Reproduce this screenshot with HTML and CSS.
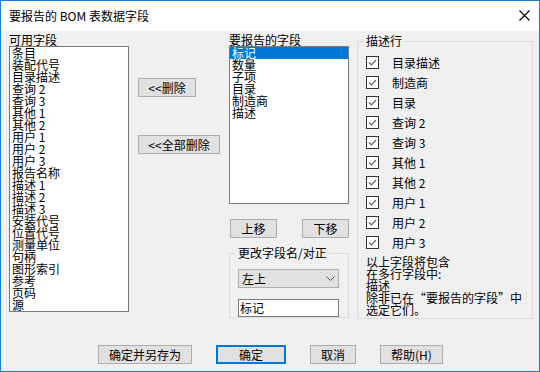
FILE: index.html
```html
<!DOCTYPE html>
<html lang="zh-CN">
<head>
    <meta charset="UTF-8">
    <title>要报告的 BOM 表数据字段</title>
    <link rel="stylesheet" href="styles.css">
</head>
<body>

    <div class="window">
        <div class="titlebar">
            <span class="title">要报告的 BOM 表数据字段</span>
            <svg class="close" width="11" height="11" viewBox="0 0 11 11">
                <path d="M0.5 0.5 L10.5 10.5 M10.5 0.5 L0.5 10.5" stroke="#000" stroke-width="1.1" fill="none"/>
            </svg>
        </div>

        <div class="content">
            <div class="panes">
                <div class="col-avail">
                    <div class="caption">可用字段</div>
                    <div class="avail-row">
                        <ul class="listbox avail">
                            <li>条目</li>
                            <li>装配代号</li>
                            <li>目录描述</li>
                            <li>查询 2</li>
                            <li>查询 3</li>
                            <li>其他 1</li>
                            <li>其他 2</li>
                            <li>用户 1</li>
                            <li>用户 2</li>
                            <li>用户 3</li>
                            <li>报告名称</li>
                            <li>描述 1</li>
                            <li>描述 2</li>
                            <li>描述 3</li>
                            <li>安装代号</li>
                            <li>位置代号</li>
                            <li>测量单位</li>
                            <li>句柄</li>
                            <li>图形索引</li>
                            <li>参考</li>
                            <li>页码</li>
                            <li>源</li>
                        </ul>
                        <div class="remove-btns">
                            <button class="btn btn-remove">&lt;&lt;删除</button>
                            <button class="btn btn-remove-all">&lt;&lt;全部删除</button>
                        </div>
                    </div>
                </div>

                <div class="col-report">
                    <div class="caption">要报告的字段</div>
                    <ul class="listbox report">
                        <li class="selected">标记</li>
                        <li>数量</li>
                        <li>子项</li>
                        <li>目录</li>
                        <li>制造商</li>
                        <li>描述</li>
                    </ul>
                    <div class="move-btns">
                        <button class="btn btn-move">上移</button>
                        <button class="btn btn-move">下移</button>
                    </div>
                    <fieldset class="group rename">
                        <legend>更改字段名/对正</legend>
                        <div class="combo">
                            <span>左上</span>
                            <svg width="9" height="5" viewBox="0 0 9 5">
                                <path d="M0.5 0.5 L4.5 4.5 L8.5 0.5" stroke="#555" stroke-width="1" fill="none"/>
                            </svg>
                        </div>
                        <div class="textbox">标记</div>
                    </fieldset>
                </div>

                <fieldset class="group desc">
                    <legend>描述行</legend>
                    <ul class="checks">
                        <li><span class="check"></span>目录描述</li>
                        <li><span class="check"></span>制造商</li>
                        <li><span class="check"></span>目录</li>
                        <li><span class="check"></span>查询 2</li>
                        <li><span class="check"></span>查询 3</li>
                        <li><span class="check"></span>其他 1</li>
                        <li><span class="check"></span>其他 2</li>
                        <li><span class="check"></span>用户 1</li>
                        <li><span class="check"></span>用户 2</li>
                        <li><span class="check"></span>用户 3</li>
                    </ul>
                    <p class="note">以上字段将包含<br>在多行字段中:<br>描述<br>除非已在“要报告的字段”中<br>选定它们。</p>
                </fieldset>
            </div>

            <div class="actions">
                <button class="btn btn-save-as">确定并另存为</button>
                <button class="btn btn-ok">确定</button>
                <button class="btn btn-cancel">取消</button>
                <button class="btn btn-help">帮助(H)</button>
            </div>
        </div>
    </div>

</body>
</html>
```

FILE: styles.css
```css
body {
    margin: 0;
    font-family: "Noto Sans CJK SC", "Liberation Sans", sans-serif;
    font-size: 12px;
    color: #000;
}

.window {
    width: 540px;
    height: 372px;
    box-sizing: border-box;
    border: 1px solid #1a7fd4;
    background: #f0f0f0;
    display: flex;
    flex-direction: column;
}

.titlebar {
    height: 30px;
    background: #fff;
    display: flex;
    align-items: center;
    justify-content: space-between;
    padding: 0 9px 0 8px;
}

.title {
    font-size: 12px;
    line-height: 14px;
}

.close {
    display: block;
    margin-top: -1px;
}

.content {
    flex: 1;
    padding: 3px 6px 0 8px;
}

.panes {
    display: flex;
    height: 285px;
}

.caption {
    line-height: 12px;
    height: 12px;
}

/* list boxes */
.listbox {
    list-style: none;
    margin: 0;
    padding: 0;
    background: #fff;
    border: 1px solid #7a7a7a;
    overflow: hidden;
    line-height: 12px;
}

.listbox li {
    padding-left: 2px;
    height: 12px;
    white-space: nowrap;
}

.listbox li.selected {
    background: #0078d7;
    color: #fff;
}

.col-avail {
    width: 220px;
    flex: none;
}

.avail-row {
    display: flex;
}

.avail {
    width: 118px;
    height: 264px;
}

.remove-btns {
    display: flex;
    flex-direction: column;
    align-items: flex-start;
    margin-left: 9px;
    padding-top: 32px;
}

/* buttons */
.btn {
    font-family: inherit;
    font-size: 12px;
    line-height: 12px;
    height: 19px;
    padding: 0;
    margin: 0;
    background: #e1e1e1;
    border: 1px solid #adadad;
    color: #000;
}

.btn-remove {
    width: 58px;
}

.btn-remove-all {
    width: 82px;
    margin-top: 38px;
}

.col-report {
    width: 120px;
    flex: none;
    margin-right: 8px;
}

.report {
    width: 118px;
    height: 156px;
}

.move-btns {
    display: flex;
    justify-content: space-between;
    padding-left: 1px;
    margin-top: 15px;
}

.btn-move {
    width: 47px;
}

/* group boxes */
.group {
    margin: 0;
    border: 1px solid #dcdcdc;
    padding: 0 8px;
    min-width: 0;
}

.group legend {
    padding: 0 2px;
    margin-left: -2px;
    line-height: 12px;
    height: 12px;
}

.rename {
    margin-top: 9px;
    padding-top: 10px;
    padding-bottom: 0;
}

.combo {
    width: 101px;
    height: 19px;
    box-sizing: border-box;
    background: #e1e1e1;
    border: 1px solid #adadad;
    display: flex;
    align-items: center;
    justify-content: space-between;
    padding: 0 3px 0 3px;
    line-height: 12px;
}

.combo svg {
    display: block;
}

.textbox {
    width: 101px;
    height: 18px;
    box-sizing: border-box;
    margin-top: 11px;
    background: #fff;
    border: 1px solid #7a7a7a;
    padding-left: 1px;
    line-height: 16px;
}

.desc {
    width: 176px;
    box-sizing: border-box;
    flex: none;
    margin-top: 1px;
    height: 284px;
    padding-top: 5px;
}

.checks {
    list-style: none;
    margin: 0;
    padding: 0;
}

.checks li {
    height: 20px;
    display: flex;
    align-items: center;
}

.check {
    width: 13px;
    height: 13px;
    box-sizing: border-box;
    border: 1px solid #333;
    background: #fff url("data:image/svg+xml;utf8,<svg xmlns='http://www.w3.org/2000/svg' width='11' height='11'><path d='M2 5.5 L4.5 8 L9 3' stroke='%23666' stroke-width='1.2' fill='none'/></svg>") no-repeat center;
    margin-right: 13px;
    flex: none;
}

.note {
    margin: 4px 0 0;
    line-height: 12px;
    white-space: nowrap;
}

.actions {
    display: flex;
    gap: 24px;
    padding-left: 89px;
    margin-top: 26px;
}

.btn-save-as {
    width: 94px;
}

.btn-ok {
    width: 70px;
    border: 2px solid #0078d7;
}

.btn-cancel {
    width: 46px;
}

.btn-help {
    width: 63px;
}
```
